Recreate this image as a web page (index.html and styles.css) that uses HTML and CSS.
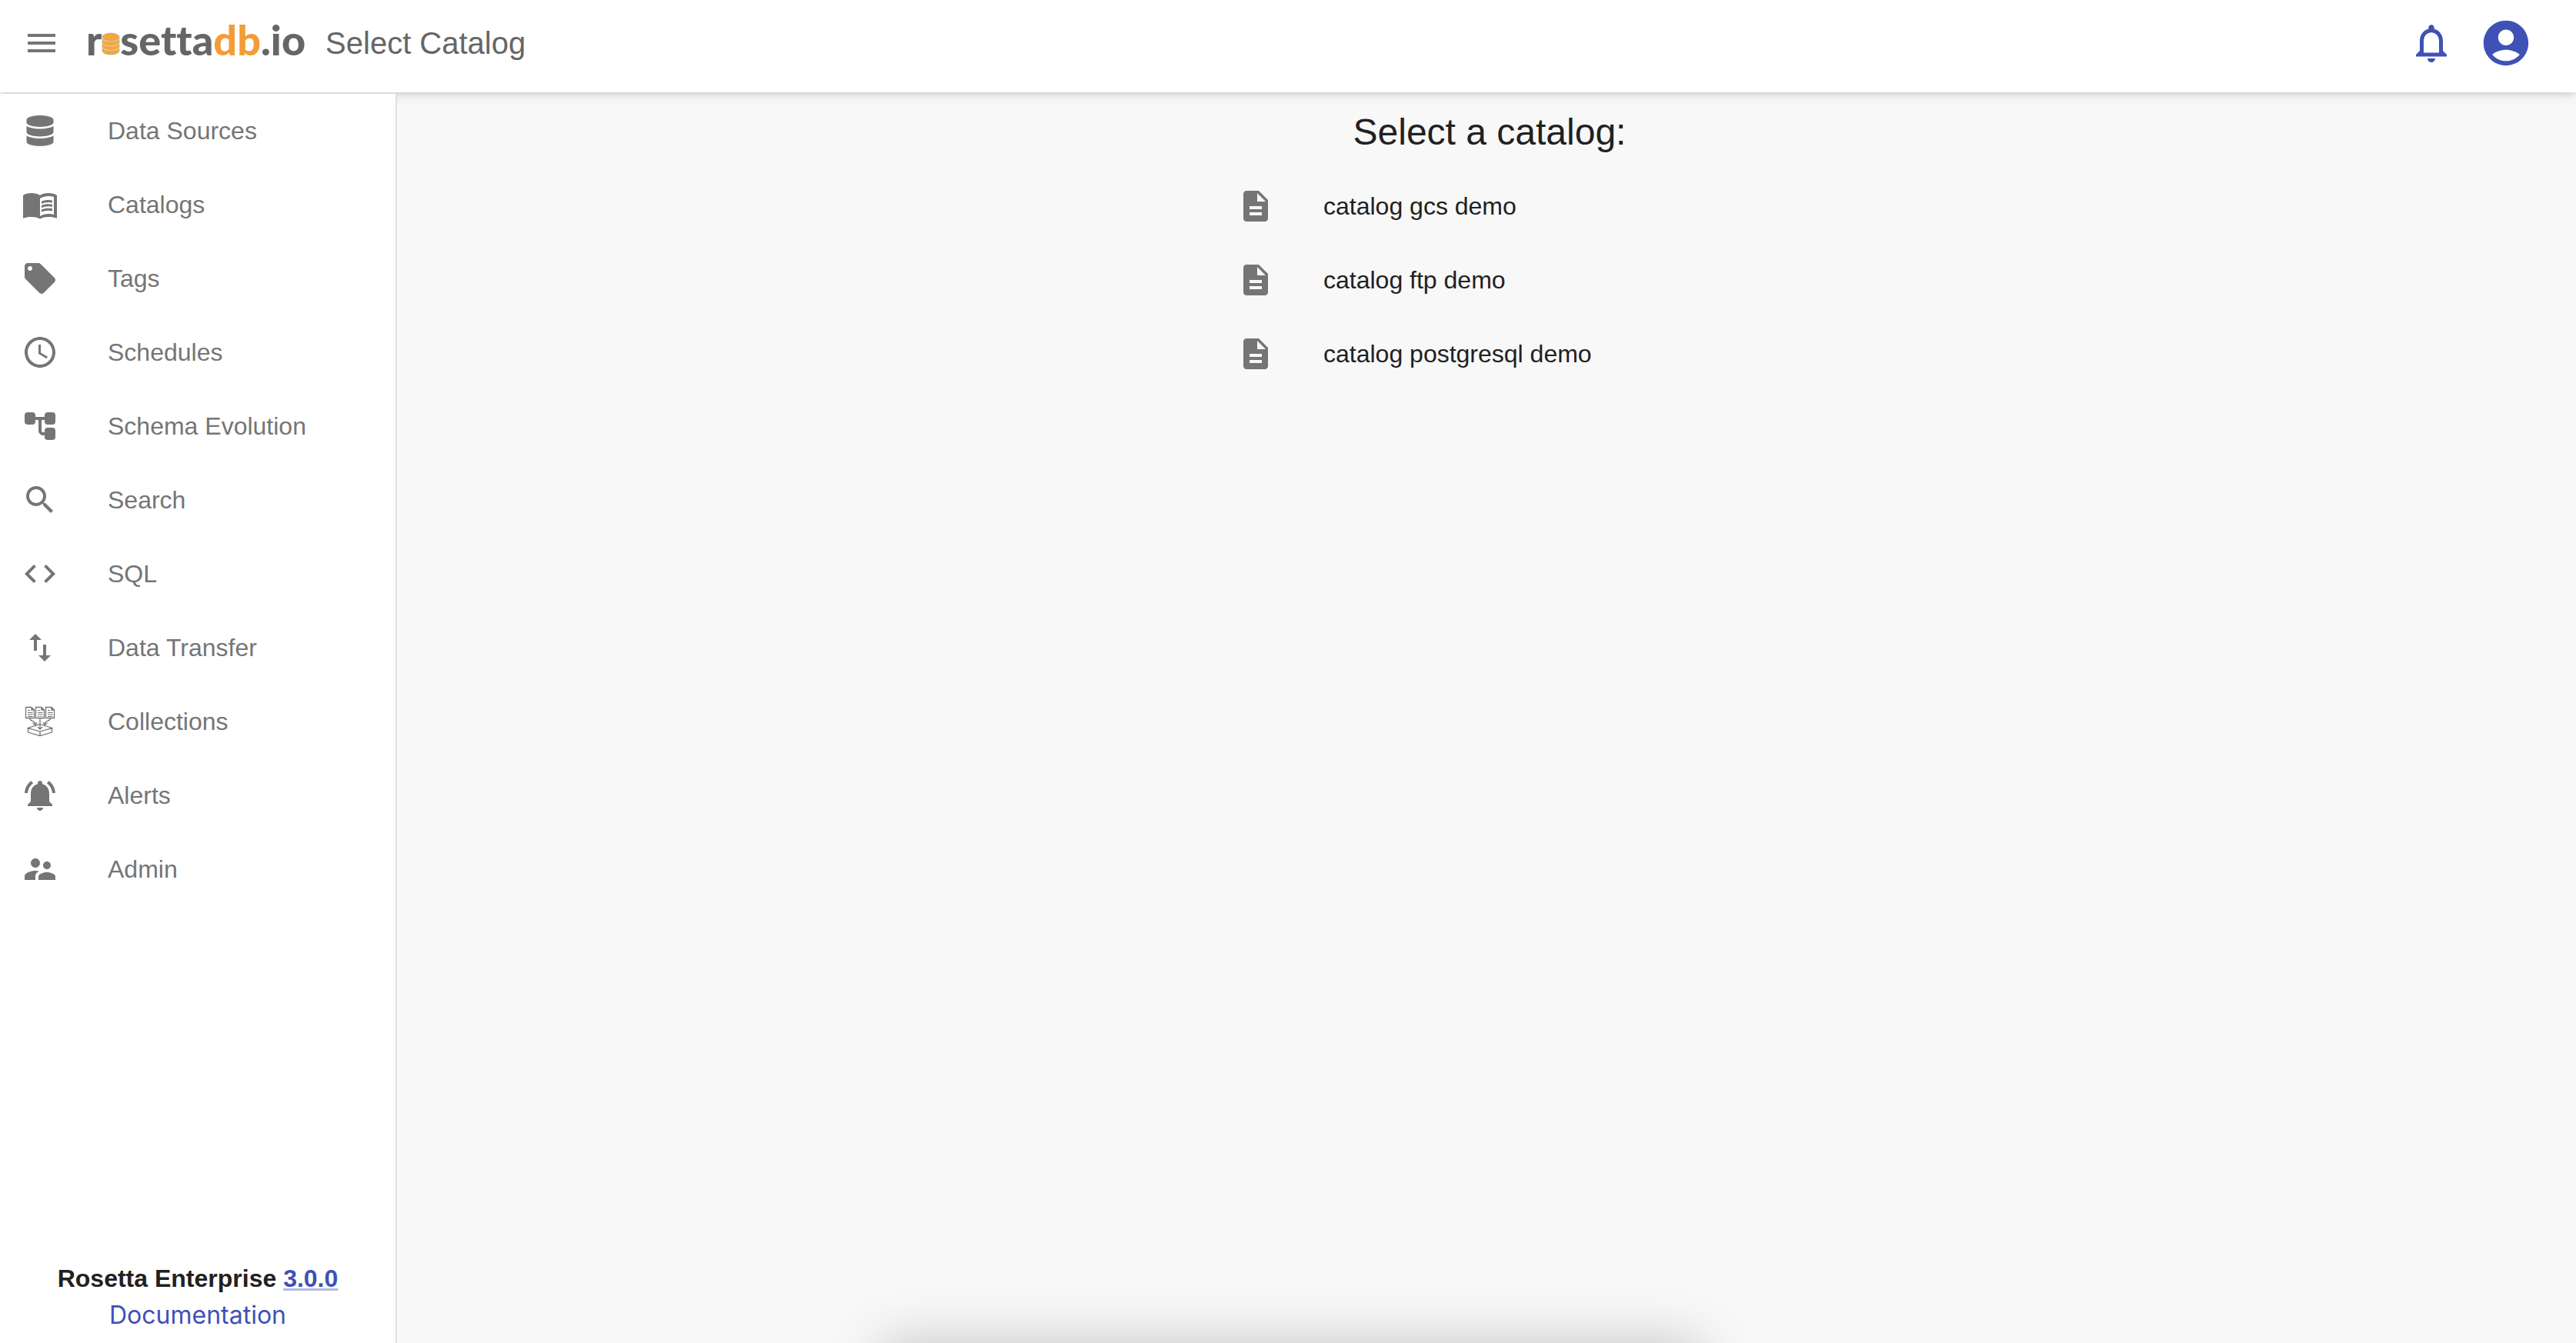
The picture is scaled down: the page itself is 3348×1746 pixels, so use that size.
FILE: index.html
```
<!DOCTYPE html>
<html lang="en">
<head>
    <meta charset="UTF-8">
    <meta name="viewport" content="width=device-width, initial-scale=1.0">
    <title>rosettadb.io - Select Catalog</title>
    <link rel="stylesheet" href="styles.css">
</head>
<body>

<header class="appbar">
    <div class="toolbar">
        <button type="button" class="icon-button" aria-label="Toggle menu">
            <svg class="icon" viewBox="0 0 24 24"><path d="M3 18h18v-2H3v2zm0-5h18v-2H3v2zm0-7v2h18V6H3z"/></svg>
        </button>
        <a href="#" class="logo" aria-label="rosettadb.io">
            <span>r</span>
            <svg class="logo-disk" viewBox="0 0 24 30">
                <path fill="#f4a63a" stroke="#b9a98c" stroke-width=".6" d="M1 6v18c0 3 5 5 11 5s11-2 11-5V6z"/>
                <ellipse cx="12" cy="6" rx="11" ry="5" fill="#f4a63a" stroke="#b9a98c" stroke-width=".6"/>
                <path fill="none" stroke="#d9cdb4" stroke-width="1.200" d="M1 7.500c1 3 5 4.500 11 4.500S22 10.500 23 7.500M1 13.500c1 3 5 4.500 11 4.500S22 16.500 23 13.500M1 19c1 3 5 4.500 11 4.500S22 22 23 19"/>
            </svg>
            <span>setta</span><span class="logo-db">db</span><span>.io</span>
        </a>
        <h1 class="page-title">Select Catalog</h1>
        <div class="actions">
            <button type="button" class="icon-button" aria-label="Notifications">
                <svg class="icon icon-bell" viewBox="0 0 24 24"><path d="M12 22c1.100 0 2-.9 2-2h-4c0 1.100.9 2 2 2zm6-6v-5c0-3.070-1.630-5.640-4.500-6.320V4c0-.83-.67-1.500-1.500-1.500s-1.500.67-1.500 1.500v.68C7.640 5.360 6 7.920 6 11v5l-2 2v1h16v-1l-2-2zm-2 1H8v-6c0-2.480 1.510-4.500 4-4.500s4 2.020 4 4.500v6z"/></svg>
            </button>
            <button type="button" class="icon-button" aria-label="Account">
                <svg class="icon icon-account" viewBox="0 0 24 24"><path d="M12 2C6.480 2 2 6.480 2 12s4.480 10 10 10 10-4.480 10-10S17.520 2 12 2zm0 4c1.930 0 3.500 1.570 3.500 3.500S13.930 13 12 13s-3.500-1.570-3.500-3.500S10.070 6 12 6zm0 14c-2.030 0-4.430-.82-6.140-2.880C7.550 15.800 9.680 15 12 15s4.450.8 6.140 2.120C16.430 19.180 14.030 20 12 20z"/></svg>
            </button>
        </div>
    </div>
</header>

<div class="layout">
    <aside class="sidebar">
        <nav class="menu">
            <a href="#" class="menu-item">
                <svg class="icon" viewBox="-83 -51 614 614"><path d="M448 73.143v45.714C448 159.143 347.667 192 224 192S0 159.143 0 118.857V73.143C0 32.857 100.333 0 224 0s224 32.857 224 73.143zM448 176v102.857C448 319.143 347.667 352 224 352S0 319.143 0 278.857V176c48.125 33.143 136.208 48.572 224 48.572S399.874 209.143 448 176zm0 160v102.857C448 479.143 347.667 512 224 512S0 479.143 0 438.857V336c48.125 33.143 136.208 48.572 224 48.572S399.874 369.143 448 336z"/></svg>
                <span>Data Sources</span>
            </a>
            <a href="#" class="menu-item">
                <svg class="icon" viewBox="0 0 24 24">
                    <path fill-rule="evenodd" d="M1 6c1.450-1.100 3.550-1.500 5.500-1.500S10.550 4.900 12 6c1.450-1.100 3.550-1.500 5.500-1.500S21.550 4.900 23 6v15c-1.500-.75-3.500-1-5.500-1-1.950 0-4.050.4-5.500 1.300-1.450-.9-3.550-1.300-5.500-1.300-2 0-4 .25-5.500 1zM12 8v11.500c1.350-.85 3.800-1.500 5.500-1.500 1.200 0 2.400.15 3.500.5V7c-1.100-.35-2.300-.5-3.500-.5-1.700 0-4.150.65-5.500 1.500z"/>
                    <path d="M17.500 10.500c.88 0 1.730.09 2.500.26V9.240c-.79-.15-1.640-.24-2.500-.24-1.700 0-3.240.29-4.500.83v1.660c1.130-.64 2.700-.99 4.500-.99zM13 12.490v1.660c1.130-.64 2.700-.99 4.500-.99.88 0 1.730.09 2.500.26V11.900c-.79-.15-1.640-.24-2.500-.24-1.700 0-3.240.3-4.500.83zM17.500 14.330c-1.700 0-3.240.29-4.500.83v1.660c1.130-.64 2.700-.99 4.500-.99.88 0 1.730.09 2.500.26v-1.520c-.79-.16-1.640-.24-2.500-.24z"/>
                </svg>
                <span>Catalogs</span>
            </a>
            <a href="#" class="menu-item">
                <svg class="icon" viewBox="0 0 24 24"><path d="M21.410 11.580l-9-9C12.050 2.220 11.550 2 11 2H4c-1.100 0-2 .9-2 2v7c0 .55.22 1.050.59 1.420l9 9c.36.36.86.58 1.410.58.55 0 1.050-.22 1.410-.59l7-7c.37-.36.59-.86.59-1.410 0-.55-.23-1.060-.59-1.420zM5.500 7C4.670 7 4 6.330 4 5.500S4.670 4 5.500 4 7 4.670 7 5.500 6.330 7 5.500 7z"/></svg>
                <span>Tags</span>
            </a>
            <a href="#" class="menu-item">
                <svg class="icon" viewBox="0 0 24 24"><path d="M11.990 2C6.470 2 2 6.480 2 12s4.470 10 9.990 10C17.520 22 22 17.520 22 12S17.520 2 11.990 2zM12 20c-4.420 0-8-3.580-8-8s3.580-8 8-8 8 3.580 8 8-3.580 8-8 8zM12.500 7H11v6l5.250 3.150.75-1.230-4.500-2.670z"/></svg>
                <span>Schedules</span>
            </a>
            <a href="#" class="menu-item">
                <svg class="icon" viewBox="0 0 24 24">
                    <rect x="2" y="3" width="7" height="8" rx="2"/>
                    <rect x="15" y="3" width="7" height="8" rx="2"/>
                    <rect x="15" y="13" width="7" height="8" rx="2"/>
                    <path class="line" stroke-width="2" d="M9 7h6M12 7v8a2 2 0 0 0 2 2h1"/>
                </svg>
                <span>Schema Evolution</span>
            </a>
            <a href="#" class="menu-item">
                <svg class="icon" viewBox="0 0 24 24"><path d="M15.500 14h-.79l-.28-.27C15.410 12.590 16 11.110 16 9.500 16 5.910 13.090 3 9.500 3S3 5.910 3 9.500 5.910 16 9.500 16c1.610 0 3.090-.59 4.230-1.570l.27.28v.79l5 4.990L20.490 19l-4.990-5zm-6 0C7.010 14 5 11.990 5 9.500S7.010 5 9.500 5 14 7.010 14 9.500 11.990 14 9.500 14z"/></svg>
                <span>Search</span>
            </a>
            <a href="#" class="menu-item">
                <svg class="icon" viewBox="0 0 24 24"><path d="M9.400 16.600L4.800 12l4.600-4.600L8 6l-6 6 6 6 1.400-1.400zm5.200 0l4.600-4.600-4.600-4.600L16 6l6 6-6 6-1.400-1.400z"/></svg>
                <span>SQL</span>
            </a>
            <a href="#" class="menu-item">
                <svg class="icon" viewBox="0 0 24 24"><path d="M9 3L5 6.990h3V14h2V6.990h3L9 3zm7 14.010V10h-2v7.010h-3L15 21l4-3.990h-3z"/></svg>
                <span>Data Transfer</span>
            </a>
            <a href="#" class="menu-item">
                <svg class="icon" viewBox="0 0 48 48">
                    <!-- three documents dropping into an open box -->
                    <path class="line" stroke-width="1.300" d="M5.500 5.500h7.500l3.500 3.500v10.500h-11zM18.500 5.500h7.500l3.500 3.500v10.500h-11zM31.500 5.500h7.500l3.500 3.500v10.500h-11zM13 5.500v3.500h3.500M26 5.500v3.500h3.500M39 5.500v3.500h3.500"/>
                    <path class="line" d="M8 9.500h3M8 12.500h6.500M8 15h6.500M8 17.500h6.500M21 9.500h3M21 12.500h6.500M21 15h6.500M21 17.500h1.500M23.500 17.500h1.500M26 17.500h1.500M34 9.500h3M34 12.500h6.500M34 15h6.500M34 17.500h6.500"/>
                    <path class="line" stroke-width="1.300" d="M10.500 20c0 4 7 2 7.500 7.500M14.500 26l3.500 2.500 2-3.500M37.500 20c0 4-7 2-7.500 7.500M33.500 26l-3.500 2.500-2-3.500M24 20v13M21 31l3 3 3-3"/>
                    <path class="line" stroke-width="1.300" d="M24 27.500l15.500 5L24 37 8.500 32.500zM8.500 32.500v5.500l15.500 4.500 15.500-4.500v-5.500M24 37v5.500"/>
                </svg>
                <span>Collections</span>
            </a>
            <a href="#" class="menu-item">
                <svg class="icon" viewBox="0 0 24 24"><path d="M7.580 4.080L6.150 2.650C3.750 4.480 2.170 7.300 2.030 10.500h2c.15-2.650 1.510-4.970 3.550-6.420zm12.390 6.420h2c-.15-3.200-1.730-6.020-4.120-7.850l-1.420 1.430c2.020 1.450 3.390 3.770 3.540 6.420zM18 11c0-3.070-1.640-5.640-4.500-6.320V4c0-.83-.67-1.500-1.500-1.500s-1.500.67-1.500 1.500v.68C7.630 5.360 6 7.920 6 11v5l-2 2v1h16v-1l-2-2v-5zm-6 11c.14 0 .27-.01.4-.04.65-.14 1.180-.58 1.440-1.180.1-.24.15-.5.15-.78h-4c.01 1.100.9 2 2.010 2z"/></svg>
                <span>Alerts</span>
            </a>
            <a href="#" class="menu-item">
                <svg class="icon" viewBox="0 0 24 24"><path d="M16.500 12c1.380 0 2.490-1.120 2.490-2.500S17.880 7 16.500 7C15.120 7 14 8.120 14 9.500s1.120 2.500 2.500 2.500zM9 11c1.660 0 2.990-1.340 2.990-3S10.660 5 9 5C7.340 5 6 6.340 6 8s1.340 3 3 3zm7.500 3c-1.830 0-5.500.92-5.500 2.750V19h11v-2.250c0-1.830-3.670-2.750-5.500-2.750zM9 13c-2.330 0-7 1.170-7 3.500V19h7v-2.250c0-.85.33-2.340 2.370-3.470C10.500 13.100 9.660 13 9 13z"/></svg>
                <span>Admin</span>
            </a>
        </nav>
        <div class="version">
            <div class="version-name">Rosetta Enterprise <a href="#" class="version-link">3.0.0</a></div>
            <a href="#" class="docs-link">Documentation</a>
        </div>
    </aside>

    <main class="content">
        <h2 class="content-title">Select a catalog:</h2>
        <div class="catalog-list">
            <a href="#" class="catalog-item">
                <svg class="icon" viewBox="0 0 24 24"><path d="M14 2H6c-1.100 0-1.990.9-1.990 2L4 20c0 1.100.89 2 1.990 2H18c1.100 0 2-.9 2-2V8l-6-6zm2 16H8v-2h8v2zm0-4H8v-2h8v2zm-3-5V3.500L18.500 9H13z"/></svg>
                <span>catalog gcs demo</span>
            </a>
            <a href="#" class="catalog-item">
                <svg class="icon" viewBox="0 0 24 24"><path d="M14 2H6c-1.100 0-1.990.9-1.990 2L4 20c0 1.100.89 2 1.990 2H18c1.100 0 2-.9 2-2V8l-6-6zm2 16H8v-2h8v2zm0-4H8v-2h8v2zm-3-5V3.500L18.500 9H13z"/></svg>
                <span>catalog ftp demo</span>
            </a>
            <a href="#" class="catalog-item">
                <svg class="icon" viewBox="0 0 24 24"><path d="M14 2H6c-1.100 0-1.990.9-1.990 2L4 20c0 1.100.89 2 1.990 2H18c1.100 0 2-.9 2-2V8l-6-6zm2 16H8v-2h8v2zm0-4H8v-2h8v2zm-3-5V3.500L18.500 9H13z"/></svg>
                <span>catalog postgresql demo</span>
            </a>
        </div>
    </main>
</div>

<div class="bottom-shade"></div>

</body>
</html>
```
FILE: styles.css
```
* {
    box-sizing: border-box;
}
body {
    margin: 0;
    min-height: 100vh;
    display: flex;
    flex-direction: column;
    font-family: "Liberation Sans", Arial, sans-serif;
    font-size: 32px;
    line-height: 48px;
    color: #212121;
    background-color: #f8f8f8;
}
a {
    color: #3f51b5;
    text-decoration: none;
}

/* top bar */
.appbar {
    position: relative;
    z-index: 1;
    padding-bottom: 8px;
    background-color: #fff;
    box-shadow: 0 4px 8px -2px rgba(0, 0, 0, 0.1), 0 2px 16px rgba(0, 0, 0, 0.12);
}
.toolbar {
    display: flex;
    align-items: center;
    height: 112px;
    padding: 0 56px 0 30px;
}
.icon-button {
    display: flex;
    padding: 0;
    border: none;
    background: none;
    color: #757575;
    cursor: pointer;
}
.icon {
    flex: none;
    display: block;
    width: 48px;
    height: 48px;
    fill: currentColor;
    color: #757575;
}
.icon .line {
    fill: none;
    stroke: currentColor;
}
.icon-bell {
    width: 60px;
    height: 60px;
    color: #3f51b5;
}
.icon-account {
    width: 70px;
    height: 70px;
    color: #3f51b5;
}
.logo {
    display: flex;
    align-items: baseline;
    margin-left: 34px;
    padding-bottom: 8px;
    font-family: Lato, sans-serif;
    font-size: 54px;
    font-weight: 900;
    font-variant-ligatures: none;
    line-height: 64px;
    color: #666;
}
.logo-disk {
    width: 24px;
    height: 30px;
}
.logo-db {
    color: #f39c38;
}
.page-title {
    margin: 0 0 0 26px;
    font-size: 40px;
    font-weight: normal;
    color: #666;
}
.actions {
    display: flex;
    align-items: center;
    gap: 32px;
    margin-left: auto;
}

.layout {
    flex: 1;
    display: flex;
}

/* side menu */
.sidebar {
    position: relative;
    z-index: 2;
    display: flex;
    flex-direction: column;
    justify-content: space-between;
    width: 516px;
    margin-top: 2px;
    border-right: 2px solid #e0e0e0;
    background-color: #fff;
}
.menu-item {
    display: flex;
    align-items: center;
    gap: 64px;
    height: 96px;
    padding: 0 28px;
    color: #757575;
}
.version {
    padding-bottom: 12px;
    text-align: center;
}
.version-name {
    font-weight: bold;
}
.version-link {
    text-decoration: underline;
    text-decoration-color: #b2b9e1;
    text-decoration-thickness: 3px;
}
.docs-link {
    font-family: Inter, sans-serif;
}

/* catalogs */
.content {
    flex: 1;
    display: flex;
    flex-direction: column;
    align-items: center;
    padding: 20px 0 0 8px;
}
.content-title {
    margin: 0;
    font-size: 48px;
    font-weight: normal;
    line-height: 64px;
}
.catalog-list {
    width: 100%;
    max-width: 720px;
    padding: 16px 0;
}
.catalog-item {
    display: flex;
    align-items: center;
    gap: 64px;
    height: 96px;
    padding: 0 32px;
    color: #212121;
}

/* shade rising from below the window */
.bottom-shade {
    position: fixed;
    z-index: 3;
    left: 50%;
    bottom: -200px;
    width: 1064px;
    height: 200px;
    margin-left: -528px;
    box-shadow: 0 0 70px rgba(0, 0, 0, 0.21);
}
```
